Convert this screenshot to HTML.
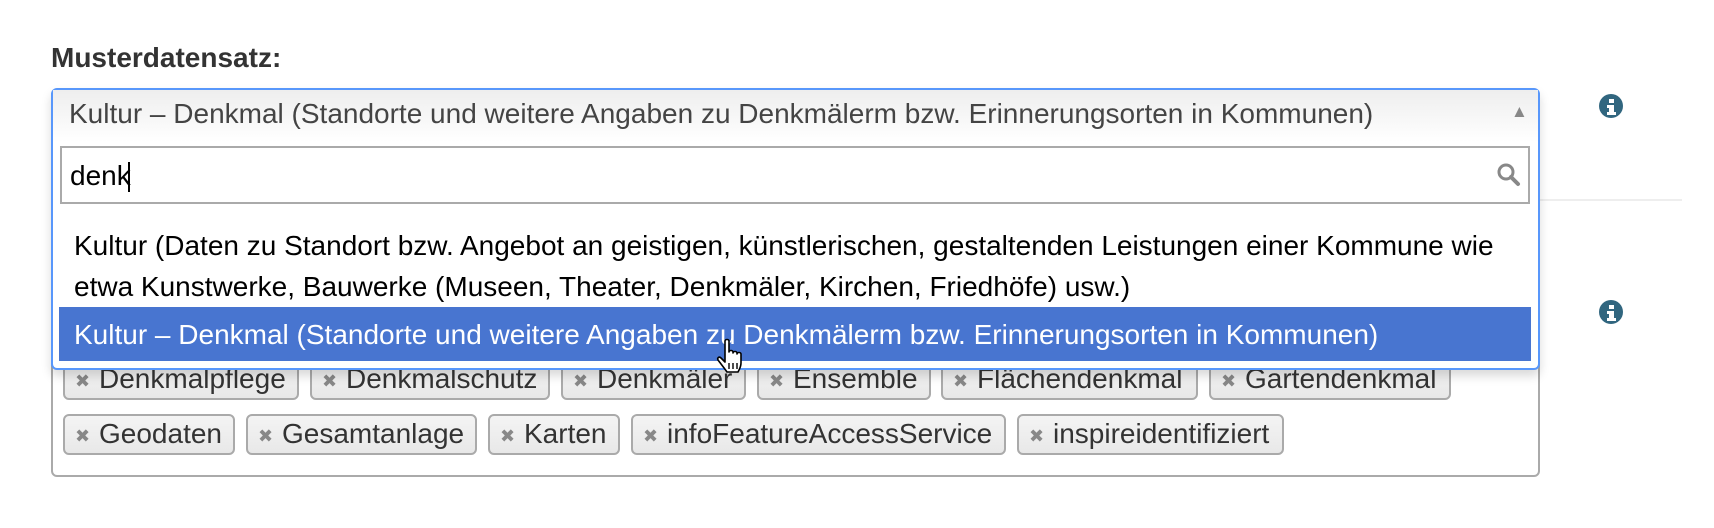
<!DOCTYPE html>
<html><head><meta charset="utf-8"><style>
*{margin:0;padding:0;box-sizing:border-box}
body{width:1714px;height:528px;background:#fff;position:relative;overflow:hidden;font-family:"Liberation Sans",Arial,sans-serif;font-size:28px}
.a{position:absolute;white-space:nowrap}
.lbl{left:51px;top:42px;font-weight:bold;color:#333}
.tagbox{left:51px;top:200px;width:1489px;height:277px;border:2px solid #aaa;border-radius:6px}
.tag{position:absolute;height:41px;border:2px solid #aaa;border-radius:6px;background:linear-gradient(#f4f4f4,#e8e8e8);color:#333;line-height:36px;padding-left:34px}
.tag:before{content:"✖";position:absolute;left:10px;top:2px;font-size:18px;color:#888}
.dd{left:51px;top:88px;width:1489px;height:282px;border:2px solid #5897fb;border-radius:6px;background:#fff;box-shadow:0 6px 10px rgba(0,0,0,.15)}
.sel{left:53px;top:90px;width:1485px;height:52px;background:linear-gradient(#eee,#fff);color:#444}
.search{left:60px;top:146px;width:1470px;height:58px;border:2px solid #aaa;background:#fff}
.hl{left:59px;top:307px;width:1472px;height:54px;background:#4875d0}
.info{position:absolute;width:24px;height:24px;border-radius:50%;background:#31667f}
</style></head><body>
<div class="a lbl">Musterdatensatz:</div>
<div style="position:absolute;left:1540px;top:199px;width:142px;height:2px;background:#eee"></div>
<div class="info" style="left:1599px;top:94px"><svg width="24" height="24"><rect x="10" y="4" width="5" height="4" fill="#fff"/><path d="M8 10h7v7h2v3H8v-3h2v-4H8z" fill="#fff"/></svg></div>
<div class="info" style="left:1599px;top:300px"><svg width="24" height="24"><rect x="10" y="4" width="5" height="4" fill="#fff"/><path d="M8 10h7v7h2v3H8v-3h2v-4H8z" fill="#fff"/></svg></div>
<div class="a tagbox">
<div class="tag" style="left:10px;top:157px;width:236px">Denkmalpflege</div>
<div class="tag" style="left:257px;top:157px;width:240px">Denkmalschutz</div>
<div class="tag" style="left:508px;top:157px;width:185px">Denkmäler</div>
<div class="tag" style="left:704px;top:157px;width:174px">Ensemble</div>
<div class="tag" style="left:888px;top:157px;width:257px">Flächendenkmal</div>
<div class="tag" style="left:1156px;top:157px;width:242px">Gartendenkmal</div>
<div class="tag" style="left:10px;top:212px;width:172px">Geodaten</div>
<div class="tag" style="left:193px;top:212px;width:231px">Gesamtanlage</div>
<div class="tag" style="left:435px;top:212px;width:132px">Karten</div>
<div class="tag" style="left:578px;top:212px;width:375px">infoFeatureAccessService</div>
<div class="tag" style="left:964px;top:212px;width:267px">inspireidentifiziert</div>
</div>
<div class="a dd"></div>
<div class="a sel"><span class="a" style="left:16px;top:8px">Kultur – Denkmal (Standorte und weitere Angaben zu Denkmälerm bzw. Erinnerungsorten in Kommunen)</span>
<span class="a" style="left:1458px;top:12px;font-size:17px;color:#888">▲</span></div>
<div class="a search"><span class="a" style="left:8px;top:12px;color:#000">denk</span><span class="a" style="left:66px;top:14px;width:2px;height:30px;background:#000"></span>
<svg class="a" style="left:1434px;top:14px" width="26" height="26"><circle cx="10" cy="10" r="7" fill="none" stroke="#888" stroke-width="3"/><path d="M15 15l7 7" stroke="#888" stroke-width="4" stroke-linecap="round"/></svg></div>
<div class="a" style="left:74px;top:225px;color:#000;line-height:41px">Kultur (Daten zu Standort bzw. Angebot an geistigen, künstlerischen, gestaltenden Leistungen einer Kommune wie<br>etwa Kunstwerke, Bauwerke (Museen, Theater, Denkmäler, Kirchen, Friedhöfe) usw.)</div>
<div class="a hl"><span class="a" style="left:15px;top:12px;color:#fff">Kultur – Denkmal (Standorte und weitere Angaben zu Denkmälerm bzw. Erinnerungsorten in Kommunen)</span></div>
<svg class="a" style="left:714px;top:338px" width="34" height="36" viewBox="0 0 34 36"><path d="M11 3c0-2 4-2 4 0v11c0-2 4-2 4 0v1c0-2 4-2 4 0v1c0-2 4-2 4 0v9c0 4-2 7-3 9H13c-2-3-6-8-9-12-1-2 1-4 3-2l4 4z" fill="#fff" stroke="#000" stroke-width="1.6" stroke-linejoin="round"/><path d="M15 25v6M19 25v6M23 25v6" stroke="#000" stroke-width="1.4"/></svg>
</body></html>
